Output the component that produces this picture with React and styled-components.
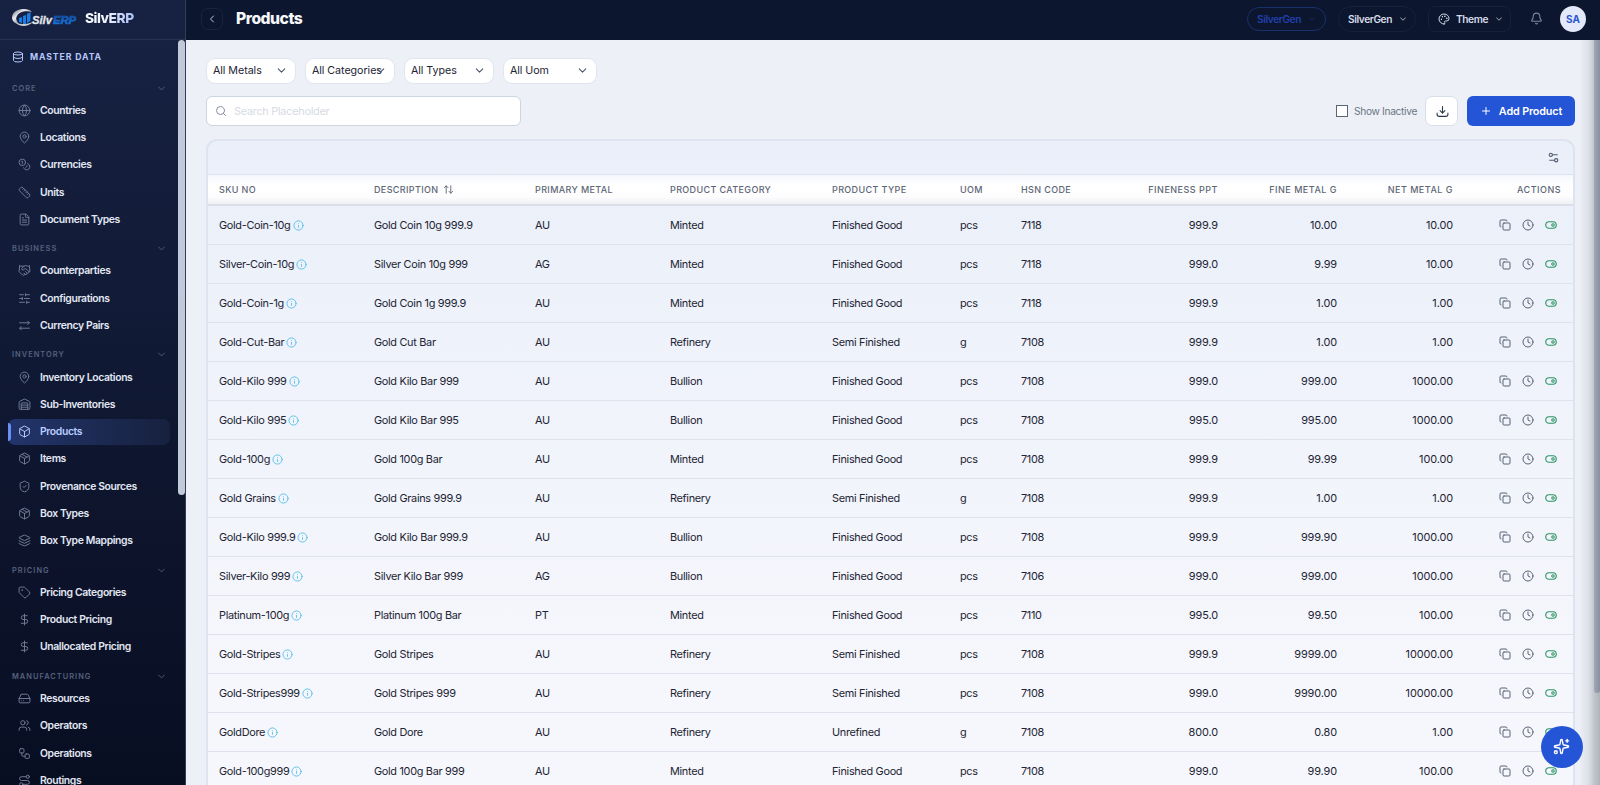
import { Fragment } from 'react';
import styled, { createGlobalStyle, css } from 'styled-components';
import {
  ArrowUpDown, Bell, Box, ChevronDown, ChevronLeft, Clock, Coins, Copy, Database, DollarSign,
  FileText, Globe, Handshake, HardDrive, Info, Layers, MapPin, Package, Palette, Plus, Route, Ruler,
  Search, Settings2, ShieldCheck, SlidersHorizontal, Sparkles, Tag, Users, Warehouse, Workflow,
} from 'lucide-react';

const GlobalStyle = createGlobalStyle`
  * { box-sizing: border-box; }
  body {
    margin: 0;
    overflow: hidden;
    font-family: Inter, "Liberation Sans", sans-serif;
    font-size: 10.9px;
    color: #1d2433;
  }
`

const Shell = styled.div`
  display: grid;
  grid-template-columns: 186px 1fr;
  width: 1600px;
  height: 785px;
  overflow: hidden;
  background: #edf1f7;
`

/* ---------- sidebar ---------- */

const Sidebar = styled.aside`
  display: flex;
  flex-direction: column;
  min-height: 0;
  border-right: 1px solid #343e58;
  background: linear-gradient(180deg, #172142 0%, #121c38 35%, #0c1229 75%, #080e22 100%);
`

const Brand = styled.div`
  flex: none;
  display: flex;
  align-items: center;
  gap: 7px;
  height: 40px;
  padding: 0 0 4px 11px;
  border-bottom: 1px solid #28324f;
`

const BrandName = styled.span`
  font-size: 13.8px;
  font-weight: 800;
  letter-spacing: -0.5px;
  background: linear-gradient(90deg, #f3f6ff 40%, #a9bdf7);
  background-clip: text;
  color: transparent;
`

const SideBody = styled.div`
  flex: 1;
  min-height: 0;
  display: flex;
`

const SideScroll = styled.nav`
  flex: 1;
  overflow: hidden;
  padding: 7.500px 8px 0;
`

const SideTrack = styled.div`
  flex: none;
  width: 7px;
`

const SideThumb = styled.div`
  height: 455px;
  border-radius: 4px;
  background: #c2c9d8;
`

const ModuleTitle = styled.div`
  display: flex;
  align-items: center;
  gap: 6px;
  height: 18px;
  padding-left: 4px;
  margin-bottom: 15.500px;
  font-size: 8.7px;
  font-weight: 700;
  letter-spacing: 0.9px;
  color: #b6c8fa;
`

const GroupTitle = styled.div`
  display: flex;
  align-items: center;
  justify-content: space-between;
  height: 14px;
  padding: 0 3px 0 4px;
  margin: ${props => props.$first ? '0' : '9.4px'} 0 2.3px;
  font-size: 7.4px;
  font-weight: 600;
  letter-spacing: 1.05px;
  color: #56617f;
`

const NavItem = styled.a`
  position: relative;
  display: flex;
  align-items: center;
  gap: 9px;
  height: 26px;
  margin-bottom: 1.25px;
  padding-left: 10px;
  border-radius: 7px;
  font-weight: 600;
  font-size: 10.4px;
  letter-spacing: -0.37px;
  color: #e1e7f3;

  svg { color: #707b95; }

  ${props => props.$active && css`
    color: #b9ccff;
    background: linear-gradient(90deg, #22356b, #17213f);
    svg { color: #b9ccff; }

    &::before {
      content: '';
      position: absolute;
      left: 0;
      top: 4px;
      width: 3px;
      height: 18px;
      border-radius: 0 3px 3px 0;
      background: #6690f5;
    }
  `}
`

/* ---------- top bar ---------- */

const Page = styled.div`
  display: flex;
  flex-direction: column;
  min-width: 0;
  min-height: 0;
`

const TopBar = styled.header`
  flex: none;
  display: flex;
  align-items: center;
  height: 40px;
  padding: 0 14px 3px 15px;
  background: #0c162e;
`

const BackButton = styled.button`
  display: grid;
  place-items: center;
  width: 22px;
  height: 22px;
  padding: 0;
  border: 1px solid #1a233b;
  border-radius: 7px;
  background: transparent;
  color: #bcc7da;
`

const Title = styled.h1`
  flex: 1;
  margin: 0 0 0 13px;
  font-size: 15.7px;
  font-weight: 800;
  letter-spacing: -0.5px;
  color: #f5f7fb;
`

const Pill = styled.button`
  display: flex;
  align-items: center;
  gap: 6px;
  width: ${props => props.$w}px;
  height: ${props => props.$h || 25}px;
  margin-right: ${props => props.$gap}px;
  padding: 0 ${props => props.$square ? 8 : 9}px 0 9px;
  border: 1px solid ${props => props.$blue ? '#18306c' : '#18213a'};
  border-radius: ${props => props.$square ? 7 : 13}px;
  background: transparent;
  font-family: inherit;
  font-size: 10.2px;
  font-weight: 600;
  letter-spacing: -0.42px;
  white-space: nowrap;
  color: ${props => props.$blue ? '#213fa9' : '#d5dbe7'};

  svg { flex: none; }
  svg:last-child {
    margin-left: auto;
    margin-right: ${props => props.$square ? 2 : 0}px;
    opacity: ${props => props.$blue ? 0.5 : 0.9};
  }
`

const BellButton = styled.span`
  display: flex;
  margin-right: 17px;
  color: #7c869c;
`

const Avatar = styled.span`
  display: grid;
  place-items: center;
  width: 26px;
  height: 26px;
  border-radius: 50%;
  background: #e3e9fa;
  color: #2c56cf;
  font-size: 10px;
  font-weight: 700;
`

/* ---------- content ---------- */

const Main = styled.main`
  flex: 1;
  min-height: 0;
  display: flex;
`

const Content = styled.div`
  flex: 1;
  min-width: 0;
  overflow: hidden;
  padding: 18px 0 0 20px;
`

const Filters = styled.div`
  display: flex;
  gap: 9px;
`

const Select = styled.div`
  display: flex;
  align-items: center;
  justify-content: space-between;
  width: ${props => props.$w}px;
  height: 26px;
  padding: 0 7px 1px 6px;
  border: 1px solid #e0e5ee;
  border-radius: 9px;
  background: #fff;
  font-size: 10.7px;
  letter-spacing: -0.05px;
  white-space: nowrap;

  span { width: 62px; }
  svg { flex: none; color: #4b5568; }
`

const Toolbar = styled.div`
  display: flex;
  align-items: center;
  height: 30px;
  margin: 12px 0 13px;
`

const SearchBox = styled.label`
  display: flex;
  align-items: center;
  gap: 7px;
  width: 315px;
  height: 30px;
  margin-right: auto;
  padding-left: 8px;
  border: 1px solid #ccd5e2;
  border-radius: 6px;
  background: #fff;
  color: #868fa0;

  input {
    flex: 1;
    padding: 0;
    border: 0;
    outline: 0;
    background: transparent;
    font: inherit;
    letter-spacing: -0.27px;
  }
  input::placeholder { color: #d7dbe3; opacity: 1; }
`

const CheckLabel = styled.label`
  display: flex;
  align-items: center;
  gap: 6px;
  padding-bottom: 1px;
  font-size: 10.2px;
  letter-spacing: -0.33px;
  color: #6c7482;
`

const Check = styled.span`
  width: 12px;
  height: 12px;
  border: 1px solid #5b6473;
  background: #fff;
`

const IconButton = styled.button`
  display: grid;
  place-items: center;
  width: 33px;
  height: 30px;
  margin: 0 9px 0 8px;
  padding: 1px 0 0 1px;
  border: 1px solid #d9dfe9;
  border-radius: 7px;
  background: #fff;
  color: #2d3648;
`

const AddButton = styled.button`
  display: flex;
  align-items: center;
  justify-content: center;
  gap: 7px;
  width: 108px;
  height: 30px;
  padding: 0;
  border: 0;
  border-radius: 6px;
  background: #2455d6;
  color: #fff;
  font-family: inherit;
  font-size: 10.8px;
  font-weight: 600;
  letter-spacing: -0.15px;
`

const Card = styled.section`
  height: 720px;
  border: 2px solid #dde3ef;
  border-radius: 11px 11px 0 0;
  overflow: hidden;
  background: linear-gradient(180deg, #eaeff9 0%, #f0f3fb 35%, #f6f7fc 75%);
`

const CardTools = styled.div`
  display: flex;
  align-items: center;
  justify-content: flex-end;
  height: 33px;
  padding: 0 13px 1px 0;
  color: #505b70;
`

const Table = styled.table`
  width: 100%;
  table-layout: fixed;
  border-collapse: separate;
  border-spacing: 0;
`

const Th = styled.th`
  height: 32px;
  padding: 0 13px 0 ${props => props.$first ? 11 : 0}px;
  border-top: 1px solid #dbe2f0;
  border-bottom: 2px solid #dcdfe6;
  background: linear-gradient(180deg, #f5f7fd 0%, #ffffff 35%, #fdfdfe 75%, #eff0f4 100%);
  text-align: ${props => props.$right ? 'right' : 'left'};
  font-size: 9px;
  font-weight: 500;
  letter-spacing: ${props => props.$right ? 0.5 : 0.37}px;
  color: #5d6676;
  white-space: nowrap;

  svg { margin-left: 4px; vertical-align: -2px; }
`

const Td = styled.td`
  height: 39.04px;
  padding: 0 13px 0 ${props => props.$first ? 11 : 0}px;
  border-bottom: 1px solid #dde2ec;
  text-align: ${props => props.$right ? 'right' : 'left'};
  letter-spacing: ${props => props.$right ? -0.1 : -0.31}px;
  white-space: nowrap;
`

const InfoIcon = styled(Info)`
  margin-left: 2px;
  vertical-align: -2px;
  color: #58bfea;
`

const Actions = styled.div`
  display: flex;
  align-items: center;
  justify-content: flex-end;
  gap: 11px;
  padding-right: 4px;
  color: #596274;
`

const PageTrack = styled.div`
  flex: none;
  width: 25px;
  display: flex;
  justify-content: flex-end;
  background: linear-gradient(90deg, #edf1f7 15%, #dcdfe5 55%, #bfc3cb 78%, #b0b3ba 100%);
`

const PageThumb = styled.div`
  width: 6px;
  height: 653px;
  border-radius: 0 0 3px 3px;
  background: linear-gradient(90deg, #a0a7b5, #8890a0);
`

const AssistantButton = styled.button`
  position: fixed;
  right: 17.500px;
  bottom: 17.500px;
  display: grid;
  place-items: center;
  width: 42px;
  height: 42px;
  padding: 0;
  border: 0;
  border-radius: 50%;
  background: #2455d6;
  color: #fff;
`

const groups = [
  { title: 'CORE', items: [
    ['Countries', Globe], ['Locations', MapPin], ['Currencies', Coins], ['Units', Ruler], ['Document Types', FileText],
  ] },
  { title: 'BUSINESS', items: [
    ['Counterparties', Handshake], ['Configurations', SlidersHorizontal], ['Currency Pairs', SwapIcon],
  ] },
  { title: 'INVENTORY', items: [
    ['Inventory Locations', MapPin], ['Sub-Inventories', Warehouse], ['Products', Box], ['Items', Package],
    ['Provenance Sources', ShieldCheck], ['Box Types', Package], ['Box Type Mappings', Layers],
  ] },
  { title: 'PRICING', items: [
    ['Pricing Categories', Tag], ['Product Pricing', DollarSign], ['Unallocated Pricing', DollarSign],
  ] },
  { title: 'MANUFACTURING', items: [
    ['Resources', HardDrive], ['Operators', Users], ['Operations', Workflow], ['Routings', Route],
  ] },
]

const columns = [
  { name: 'SKU NO', w: 166 },
  { name: 'DESCRIPTION', w: 161, sort: true },
  { name: 'PRIMARY METAL', w: 135 },
  { name: 'PRODUCT CATEGORY', w: 162 },
  { name: 'PRODUCT TYPE', w: 128 },
  { name: 'UOM', w: 61 },
  { name: 'HSN CODE', w: 110 },
  { name: 'FINENESS PPT', w: 100, right: true },
  { name: 'FINE METAL G', w: 119, right: true },
  { name: 'NET METAL G', w: 116, right: true },
  { name: 'ACTIONS', w: 108, right: true },
]

const products = [
  ['Gold-Coin-10g', 'Gold Coin 10g 999.9', 'AU', 'Minted', 'Finished Good', 'pcs', '7118', '999.9', '10.00', '10.00'],
  ['Silver-Coin-10g', 'Silver Coin 10g 999', 'AG', 'Minted', 'Finished Good', 'pcs', '7118', '999.0', '9.99', '10.00'],
  ['Gold-Coin-1g', 'Gold Coin 1g 999.9', 'AU', 'Minted', 'Finished Good', 'pcs', '7118', '999.9', '1.00', '1.00'],
  ['Gold-Cut-Bar', 'Gold Cut Bar', 'AU', 'Refinery', 'Semi Finished', 'g', '7108', '999.9', '1.00', '1.00'],
  ['Gold-Kilo 999', 'Gold Kilo Bar 999', 'AU', 'Bullion', 'Finished Good', 'pcs', '7108', '999.0', '999.00', '1000.00'],
  ['Gold-Kilo 995', 'Gold Kilo Bar 995', 'AU', 'Bullion', 'Finished Good', 'pcs', '7108', '995.0', '995.00', '1000.00'],
  ['Gold-100g', 'Gold 100g Bar', 'AU', 'Minted', 'Finished Good', 'pcs', '7108', '999.9', '99.99', '100.00'],
  ['Gold Grains', 'Gold Grains 999.9', 'AU', 'Refinery', 'Semi Finished', 'g', '7108', '999.9', '1.00', '1.00'],
  ['Gold-Kilo 999.9', 'Gold Kilo Bar 999.9', 'AU', 'Bullion', 'Finished Good', 'pcs', '7108', '999.9', '999.90', '1000.00'],
  ['Silver-Kilo 999', 'Silver Kilo Bar 999', 'AG', 'Bullion', 'Finished Good', 'pcs', '7106', '999.0', '999.00', '1000.00'],
  ['Platinum-100g', 'Platinum 100g Bar', 'PT', 'Minted', 'Finished Good', 'pcs', '7110', '995.0', '99.50', '100.00'],
  ['Gold-Stripes', 'Gold Stripes', 'AU', 'Refinery', 'Semi Finished', 'pcs', '7108', '999.9', '9999.00', '10000.00'],
  ['Gold-Stripes999', 'Gold Stripes 999', 'AU', 'Refinery', 'Semi Finished', 'pcs', '7108', '999.0', '9990.00', '10000.00'],
  ['GoldDore', 'Gold Dore', 'AU', 'Refinery', 'Unrefined', 'g', '7108', '800.0', '0.80', '1.00'],
  ['Gold-100g999', 'Gold 100g Bar 999', 'AU', 'Minted', 'Finished Good', 'pcs', '7108', '999.0', '99.90', '100.00'],
]

function SwapIcon(props) {
  return (
    <svg width={props.size} height={props.size} viewBox="0 0 24 24" fill="none" stroke="currentColor" strokeWidth={props.strokeWidth} strokeLinecap="round" strokeLinejoin="round">
      <path d="M3 7h18M18 4l3 3-3 3M21 17H3M6 14l-3 3 3 3" />
    </svg>
  )
}

function Logo() {
  return (
    <svg width="67" height="20" viewBox="0 0 67 20">
      <defs>
        <linearGradient id="ring" x1="0" y1="0" x2="1" y2="1">
          <stop offset="0" stopColor="#5d6570" />
          <stop offset="0.35" stopColor="#eceef2" />
          <stop offset="0.7" stopColor="#6b727e" />
          <stop offset="1" stopColor="#d5d9e0" />
        </linearGradient>
        <linearGradient id="erp" x1="0" y1="0" x2="0" y2="1">
          <stop offset="0" stopColor="#0d2f78" />
          <stop offset="1" stopColor="#1c8df0" />
        </linearGradient>
      </defs>
      <path d="M21 4C16-1 5 1 2 6c-3 5 1 10 8 11-4-2-6-6-4-9 2-4 8-6 15-4z" fill="url(#ring)" />
      <path d="M5 15c4 4 12 4 17-1-5 2-11 3-17 1z" fill="#c5cad2" />
      <path d="M8 10l3-1v6l-3-1zM12 8l3-1v9l-3 0zM16 6l3.500-2v9l-3.500 2z" fill="#1a7ee8" />
      <text x="21" y="15.5" fontFamily="Liberation Sans, sans-serif" fontSize="11.500" fontWeight="700" fontStyle="italic" fill="#e4e7ec" stroke="#e4e7ec" strokeWidth="0.300" textLength="20" lengthAdjust="spacingAndGlyphs">Silv</text>
      <text x="42" y="15.5" fontFamily="Liberation Sans, sans-serif" fontSize="10.500" fontWeight="700" fontStyle="italic" fill="url(#erp)" stroke="#1765c4" strokeWidth="0.600" textLength="23" lengthAdjust="spacingAndGlyphs">ERP</text>
    </svg>
  )
}

function DownloadIcon() {
  return (
    <svg width="13" height="13" viewBox="0 0 24 24" fill="none" stroke="currentColor" strokeWidth="2" strokeLinecap="round" strokeLinejoin="round">
      <path d="M12 3v12M7.5 10.500l4.500 4.500 4.500-4.500M2 15v2a4 4 0 0 0 4 4h12a4 4 0 0 0 4-4v-2" />
    </svg>
  )
}

function ActiveIcon() {
  return (
    <svg width="12" height="12" viewBox="0 0 24 24" fill="none" stroke="#2b9363" strokeWidth="2.200">
      <rect x="1.500" y="5.500" width="21" height="13" rx="6.500" />
      <circle cx="16" cy="12" r="2.500" />
    </svg>
  )
}

function SideNav() {
  return (
    <Sidebar>
      <Brand>
        <Logo />
        <BrandName>SilvERP</BrandName>
      </Brand>
      <SideBody>
        <SideScroll>
          <ModuleTitle><Database size={12} />MASTER DATA</ModuleTitle>
          {
            groups.map((group, i) => (
              <Fragment key={group.title}>
                <GroupTitle $first={i == 0}>{group.title}<ChevronDown size={11} /></GroupTitle>
                {
                  group.items.map(([name, Icon]) => (
                    <NavItem key={name} $active={name == 'Products'}>
                      <Icon size={13} strokeWidth={1.8} />{name}
                    </NavItem>
                  ))
                }
              </Fragment>
            ))
          }
        </SideScroll>
        <SideTrack><SideThumb /></SideTrack>
      </SideBody>
    </Sidebar>
  )
}

function ProductTable() {
  return (
    <Card>
      <CardTools><Settings2 size={13} /></CardTools>
      <Table>
        <colgroup>
          { columns.map(c => <col key={c.name} width={c.w} />) }
        </colgroup>
        <thead>
          <tr>
            {
              columns.map((c, i) => (
                <Th key={c.name} $first={i == 0} $right={c.right}>
                  {c.name}{ c.sort ? <ArrowUpDown size={11} /> : null }
                </Th>
              ))
            }
          </tr>
        </thead>
        <tbody>
          {
            products.map(row => (
              <tr key={row[0]}>
                {
                  row.map((cell, i) => (
                    <Td key={i} $first={i == 0} $right={columns[i].right}>
                      {cell}{ i == 0 ? <InfoIcon size={11} /> : null }
                    </Td>
                  ))
                }
                <Td $right>
                  <Actions><Copy size={12} /><Clock size={12} /><ActiveIcon /></Actions>
                </Td>
              </tr>
            ))
          }
        </tbody>
      </Table>
    </Card>
  )
}

export default function App() {
  return (
    <Shell>
      <GlobalStyle />
      <SideNav />
      <Page>
        <TopBar>
          <BackButton><ChevronLeft size={12} /></BackButton>
          <Title>Products</Title>
          <Pill $w={79} $h={24} $gap={12} $blue>SilverGen<ChevronDown size={10} /></Pill>
          <Pill $w={78} $h={26} $gap={12}>SilverGen<ChevronDown size={10} /></Pill>
          <Pill $w={83} $h={26} $gap={19} $square><Palette size={12} />Theme<ChevronDown size={10} /></Pill>
          <BellButton><Bell size={13} /></BellButton>
          <Avatar>SA</Avatar>
        </TopBar>
        <Main>
          <Content>
            <Filters>
              <Select $w={90}><span>All Metals</span><ChevronDown size={13} /></Select>
              <Select $w={90}><span>All Categories</span><ChevronDown size={13} /></Select>
              <Select $w={90}><span>All Types</span><ChevronDown size={13} /></Select>
              <Select $w={94}><span>All Uom</span><ChevronDown size={13} /></Select>
            </Filters>
            <Toolbar>
              <SearchBox><Search size={12} /><input placeholder="Search Placeholder" /></SearchBox>
              <CheckLabel><Check />Show Inactive</CheckLabel>
              <IconButton><DownloadIcon /></IconButton>
              <AddButton><Plus size={12} />Add Product</AddButton>
            </Toolbar>
            <ProductTable />
          </Content>
          <PageTrack><PageThumb /></PageTrack>
        </Main>
      </Page>
      <AssistantButton><Sparkles size={17} /></AssistantButton>
    </Shell>
  )
}
